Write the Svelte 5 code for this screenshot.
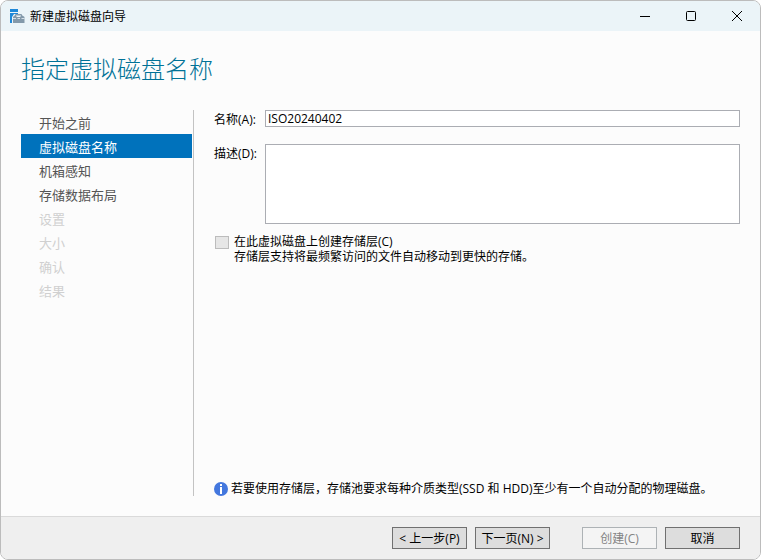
<script lang="ts">
  type Step = { label: string; state: `open` | `current` | `disabled` }

  const steps: Step[] = [
    { label: `开始之前`, state: `open` },
    { label: `虚拟磁盘名称`, state: `current` },
    { label: `机箱感知`, state: `open` },
    { label: `存储数据布局`, state: `open` },
    { label: `设置`, state: `disabled` },
    { label: `大小`, state: `disabled` },
    { label: `确认`, state: `disabled` },
    { label: `结果`, state: `disabled` },
  ]

  let name = $state(`ISO20240402`)
  let description = $state(``)
  let tiered = $state(false)
</script>

<div class="window">
  <header class="titlebar">
    <svg class="app-icon" width="16" height="16" viewBox="0 0 16 16" aria-hidden="true">
      <path d="M0 1h8v3H0zM0 5h8v1H4L2 9v6H0z" fill="#1e88d8" />
      <path d="M5.5 8V6.500h6V8" fill="none" stroke="#8399aa" />
      <path d="M3 9l1.500-1.500h8L14.500 9v6H3z" fill="#8399aa" />
      <path d="M3 10.500h3m1.500 0h2.500m1.500 0h3" stroke="#d5e0e8" />
      <path d="M6.500 8.500h4" stroke="#edf3f7" />
    </svg>
    <span class="caption">新建虚拟磁盘向导</span>
    <div class="controls">
      <button type="button" aria-label="最小化">
        <svg width="12" height="12" viewBox="0 0 12 12"><path d="M1 6.500h10" /></svg>
      </button>
      <button type="button" aria-label="最大化">
        <svg width="12" height="12" viewBox="0 0 12 12">
          <rect x="1.500" y="1.500" width="9" height="9" rx="1" />
        </svg>
      </button>
      <button type="button" aria-label="关闭">
        <svg width="12" height="12" viewBox="0 0 12 12"><path d="M1 1l10 10M11 1L1 11" /></svg>
      </button>
    </div>
  </header>

  <h1>指定虚拟磁盘名称</h1>

  <div class="body">
    <nav>
      <ol>
        {#each steps as step (step.label)}
          <li class={step.state} aria-current={step.state === `current` ? `step` : undefined}>
            {step.label}
          </li>
        {/each}
      </ol>
    </nav>

    <main>
      <div class="field">
        <label for="disk-name">名称(A):</label>
        <input id="disk-name" type="text" spellcheck="false" bind:value={name} />
      </div>
      <div class="field description">
        <label for="disk-description">描述(D):</label>
        <textarea id="disk-description" bind:value={description}></textarea>
      </div>
      <div class="tier">
        <input id="tiered" type="checkbox" disabled bind:checked={tiered} />
        <div>
          <label for="tiered">在此虚拟磁盘上创建存储层(C)</label>
          <p>存储层支持将最频繁访问的文件自动移动到更快的存储。</p>
        </div>
      </div>
      <div class="note">
        <svg width="14" height="14" viewBox="0 0 14 14" aria-hidden="true">
          <circle cx="7" cy="7" r="7" fill="#4377de" />
          <path d="M6 2h2v2H6zM6 5h2v7H6z" fill="#fff" />
        </svg>
        <span>若要使用存储层，存储池要求每种介质类型(SSD 和 HDD)至少有一个自动分配的物理磁盘。</span>
      </div>
    </main>
  </div>

  <footer>
    <button type="button">&lt; 上一步(P)</button>
    <button type="button">下一页(N) &gt;</button>
    <button type="button" class="create" disabled>创建(C)</button>
    <button type="button">取消</button>
  </footer>
</div>

<style>
  :global(body) {
    margin: 0;
    background: #fff;
  }
  .window {
    box-sizing: border-box;
    min-height: 100vh;
    display: flex;
    flex-direction: column;
    overflow: hidden;
    border: 1px solid #bcbcbc;
    border-radius: 8px;
    background: #fcfcfc;
    color: #000;
    font: 12px/15px 'Open Sans', 'Noto Sans CJK SC', sans-serif;
  }
  .titlebar {
    display: flex;
    align-items: center;
    height: 30px;
    padding-left: 9px;
    background: #ebf4f8;
  }
  .caption {
    flex: 1;
    margin-left: 4px;
  }
  .controls {
    display: flex;
  }
  .controls button {
    display: grid;
    place-items: center;
    width: 46px;
    height: 30px;
    padding: 0;
    border: 0;
    background: none;
  }
  .controls svg {
    fill: none;
    stroke: #000;
  }
  h1 {
    margin: 21px 20px 0;
    color: #007297;
    font-family: 'Noto Sans CJK SC', sans-serif;
    font-size: 24px;
    font-weight: 300;
    line-height: 32px;
  }
  .body {
    flex: 1;
    display: flex;
    padding: 26px 20px 20px;
  }
  nav {
    width: 172px;
    border-right: 1px solid #c3c3c3;
  }
  ol {
    margin: 0 1px 0 0;
    padding: 0;
    list-style: none;
  }
  li {
    height: 24px;
    padding: 1px 0 0 18px;
    box-sizing: border-box;
    color: #555;
    font-size: 13px;
    line-height: 24px;
  }
  li.current {
    background: #0072bc;
    color: #fff;
  }
  li.disabled {
    color: #d0d0d0;
  }
  main {
    flex: 1;
    display: flex;
    flex-direction: column;
    padding-left: 20px;
  }
  .field {
    display: flex;
  }
  .field label {
    width: 51px;
    padding-top: 2px;
  }
  .field input,
  .field textarea {
    flex: 1;
    box-sizing: border-box;
    min-width: 0;
    height: 17px;
    padding: 0 2px;
    border: 1px solid #abadb3;
    border-radius: 0;
    background: #fff;
    color: #000;
    font: inherit;
    resize: none;
  }
  .description {
    margin-top: 17px;
  }
  .field textarea {
    height: 80px;
  }
  .tier {
    display: flex;
    gap: 5px;
    margin-top: 10px;
  }
  .tier input {
    appearance: none;
    box-sizing: border-box;
    width: 14px;
    height: 13px;
    margin: 2px 0 0 1px;
    border: 1px solid #bcbcbc;
    background: #e6e6e6;
  }
  .tier label {
    display: block;
  }
  .tier p {
    margin: 0;
  }
  .note {
    display: flex;
    align-items: center;
    gap: 3px;
    margin-top: auto;
  }
  footer {
    display: flex;
    justify-content: flex-end;
    gap: 8px;
    padding: 10px 20px;
    border-top: 1px solid #dadada;
    background: #efefef;
  }
  footer button {
    width: 75px;
    height: 22px;
    padding: 0;
    border: 1px solid #707070;
    background: #ddd;
    color: #000;
    font: inherit;
    white-space: nowrap;
  }
  footer .create {
    margin-left: 24px;
    border-color: #adb2b5;
    background: #f4f4f4;
    color: #838383;
  }
</style>
